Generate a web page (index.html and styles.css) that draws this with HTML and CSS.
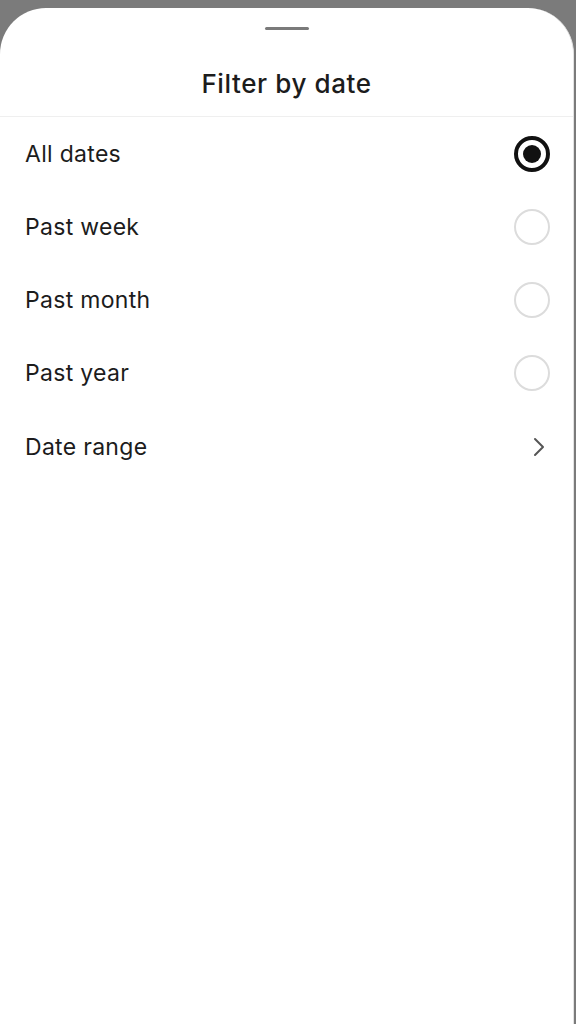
FILE: index.html
```html
<!DOCTYPE html>
<html lang="en">
<head>
    <meta charset="UTF-8">
    <meta name="viewport" content="width=device-width, initial-scale=1.0">
    <title>Filter by date</title>
    <link rel="stylesheet" href="styles.css">
</head>
<body>
    <div class="sheet">
        <div class="handle"></div>
        <h1 class="title">Filter by date</h1>
        <ul class="list">
            <li class="row">
                <span>All dates</span>
                <i class="radio active"></i>
            </li>
            <li class="row">
                <span>Past week</span>
                <i class="radio"></i>
            </li>
            <li class="row">
                <span>Past month</span>
                <i class="radio"></i>
            </li>
            <li class="row">
                <span>Past year</span>
                <i class="radio"></i>
            </li>
            <li class="row more">
                <span>Date range</span>
                <svg class="chev" width="14" height="22" viewBox="0 0 14 22">
                    <path d="M3 3 L11 11 L3 19" fill="none" stroke="#555" stroke-width="2" stroke-linecap="round" stroke-linejoin="round"/>
                </svg>
            </li>
        </ul>
    </div>
</body>
</html>
```

FILE: styles.css
```css
body {
    margin: 0;
    background-color: #7b7b7b;
    font-family: Inter, Roboto, "Liberation Sans", sans-serif;
    color: #1c1c1c;
}

ul {
    margin: 0;
    padding: 0;
}

li {
    list-style: none;
}

.sheet {
    margin-top: 8px;
    margin-right: 2px;
    height: 1016px;
    background-color: #fff;
    border-radius: 46px 46px 0 0;
    border-right: 1px solid #e2e2e2;
    overflow: hidden;
}

.handle {
    width: 44px;
    height: 3px;
    margin: 19px auto 0;
    border-radius: 2px;
    background-color: #7a7a7a;
}

.title {
    margin: 0;
    padding: 39px 0 17px;
    text-align: center;
    font-size: 26px;
    font-weight: 500;
    letter-spacing: 0.6px;
    line-height: 30px;
    border-bottom: 1px solid #efefef;
}

.row {
    height: 73px;
    padding: 0 23px 0 25px;
    display: flex;
    align-items: center;
    justify-content: space-between;
    font-size: 23px;
    letter-spacing: 0.3px;
}

.radio {
    width: 32px;
    height: 32px;
    border: 2px solid #dcdcdc;
    border-radius: 50%;
    box-sizing: content-box;
}

.radio.active {
    width: 18px;
    height: 18px;
    border: 4px solid #111;
    padding: 5px;
    background-color: #111;
    background-clip: content-box;
}

.more {
    height: 76px;
}

.chev {
    margin-right: 4px;
}
```
